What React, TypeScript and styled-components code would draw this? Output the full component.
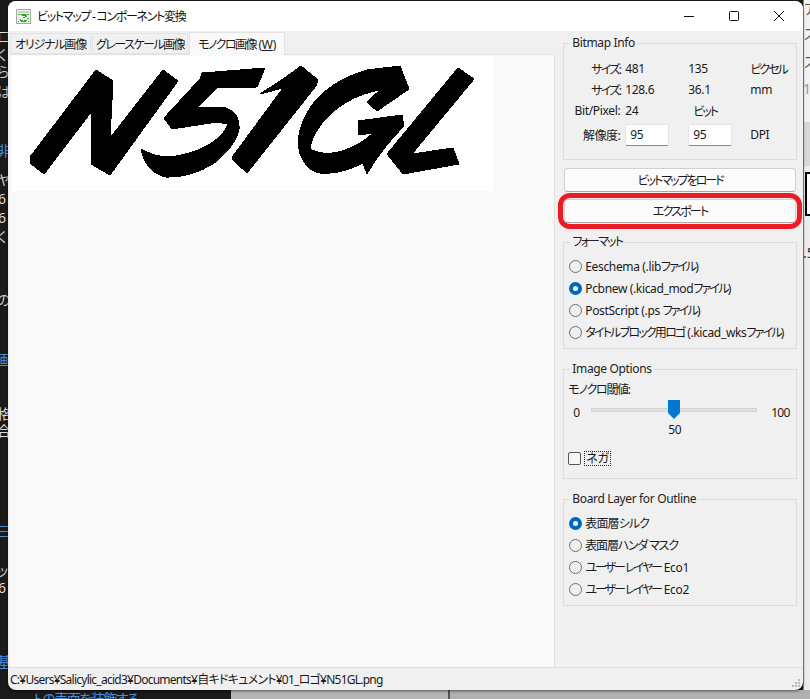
import React from "react";
import styled, { createGlobalStyle } from "styled-components";

const Global = createGlobalStyle`
  html, body { margin: 0; padding: 0; background: #1a1a1a; }
  * { box-sizing: border-box; }
`;

const Desktop = styled.div`
  position: relative;
  width: 810px;
  height: 699px;
  overflow: hidden;
  background: #1a1a1a;
  font-family: "Noto Sans", "Noto Sans CJK JP", sans-serif;
  font-feature-settings: "palt";
`;

const BackRight = styled.div`
  position: absolute;
  left: 803px;
  top: 0;
  width: 7px;
  height: 699px;
  background: linear-gradient(#f2f2f2 0 122px, #d8d8d8 122px 166px, #ececec 166px 699px);
  border-left: 1px solid #888;
`;

const BackBottomGrey = styled.div`
  position: absolute;
  left: 231px;
  top: 690px;
  width: 579px;
  height: 9px;
  background: linear-gradient(90deg, #b4b4b4 0 217px, #555 217px 219px, #b0b0b0 219px);
`;

const Fragment = styled.span<{ $x: number; $y: number; $c: string; $s?: number }>`
  position: absolute;
  left: ${(p) => p.$x}px;
  top: ${(p) => p.$y}px;
  color: ${(p) => p.$c};
  font-size: 14px;
  line-height: 16px;
  letter-spacing: ${(p) => p.$s ?? 0}px;
  white-space: nowrap;
`;

const BlackIcon = styled.div`
  position: absolute;
  left: 805px;
  top: 172px;
  width: 6px;
  height: 44px;
  background: #fff;
  border: 2px solid #000;
  border-right: none;
`;

const Window = styled.div`
  position: absolute;
  left: 8px;
  top: 1px;
  width: 795px;
  height: 689px;
  display: flex;
  flex-direction: column;
  background: #f0f0f0;
  border-radius: 8px;
  overflow: hidden;
  box-shadow: 0 1px 3px rgba(0, 0, 0, 0.55);
  font-size: 12px;
  letter-spacing: -0.35px;
  color: #1a1a1a;
`;

const K = styled.span<{ $s: number }>`
  letter-spacing: ${(p) => p.$s}px;
`;

const TitleBar = styled.div`
  height: 30px;
  flex: none;
  display: flex;
  align-items: center;
  background: #fff;
  padding: 0 2px 0 8px;
  gap: 6px;
`;

const TitleText = styled.span`
  flex: 1;
  font-size: 12px;
  letter-spacing: -1.3px;
  color: #111;
`;

const WinButtons = styled.div`
  display: flex;
`;

const WinButton = styled.div`
  width: 45px;
  height: 30px;
  display: flex;
  align-items: center;
  justify-content: center;
`;

const Body = styled.div`
  flex: 1;
  min-height: 0;
  display: flex;
  gap: 8px;
  padding: 1px 6px 0 2px;
`;

const Notebook = styled.div`
  width: 546px;
  display: flex;
  flex-direction: column;
`;

const TabRow = styled.div`
  height: 23px;
  flex: none;
  display: flex;
  align-items: flex-end;
  gap: 1px;
  border-bottom: 1px solid #e3e3e3;
`;

const Tab = styled.div<{ $active?: boolean; $w: number }>`
  width: ${(p) => p.$w}px;
  height: ${(p) => (p.$active ? 23 : 21)}px;
  display: flex;
  align-items: center;
  justify-content: center;
  white-space: nowrap;
  background: ${(p) => (p.$active ? "#f9f9f9" : "#f0f0f0")};
  border: 1px solid #e3e3e3;
  border-bottom: ${(p) => (p.$active ? "none" : "1px solid #e3e3e3")};
  margin-bottom: ${(p) => (p.$active ? "-1px" : "0")};
  position: relative;
  font-size: 12px;
`;

const Page = styled.div`
  flex: 1;
  min-height: 0;
  background: #f9f9f9;
  border-right: 1px solid #e3e3e3;
  padding: 1px 0 0 2px;
`;

const ImageBox = styled.div`
  width: 481px;
  height: 135px;
  background: #fff;
`;

const Side = styled.div`
  width: 234px;
  display: flex;
  flex-direction: column;
  position: relative;
`;

const Group = styled.fieldset<{ $h: number; $mt: number }>`
  margin: ${(p) => p.$mt}px 0 0;
  padding: 0 5px 0 5px;
  height: ${(p) => p.$h}px;
  border: 1px solid #dcdcdc;
  min-width: 0;
`;

const Legend = styled.legend`
  margin-left: 1px;
  padding: 0 2px;
  font-size: 12px;
  line-height: 14px;
  color: #222;
`;

const InfoGrid = styled.div`
  display: grid;
  grid-template-columns: 56px 63px 62px auto;
  grid-template-rows: 21px 21px 21px 27px;
  column-gap: 0;
  margin-top: 8px;
  align-items: center;
`;

const InfoLabel = styled.span`
  text-align: right;
  padding-right: 5px;
  white-space: nowrap;
`;

const InfoValue = styled.span`
  white-space: nowrap;
`;

const BitUnit = styled.span`
  white-space: nowrap;
  padding-left: 5px;
`;

const NumField = styled.div`
  width: 44px;
  height: 22px;
  background: #fff;
  border: 1px solid #e5e5e5;
  border-bottom: 1px solid #8a8a8a;
  border-radius: 2px;
  padding-left: 4px;
  line-height: 20px;
`;

const Btn = styled.div<{ $mt: number }>`
  margin: ${(p) => p.$mt}px 1px 0;
  height: 24px;
  flex: none;
  display: flex;
  align-items: center;
  justify-content: center;
  background: #fbfbfb;
  border: 1px solid #d0d0d0;
  border-bottom: 1px solid #a8a8a8;
  border-radius: 4px;
  font-size: 12px;
`;

const Highlight = styled.div`
  position: absolute;
  left: -5px;
  top: 161px;
  width: 244px;
  height: 36px;
  border: 5px solid #ed1c24;
  border-radius: 12px;
  pointer-events: none;
`;

const RadioList = styled.div`
  display: flex;
  flex-direction: column;
  margin-top: 6px;
`;

const RadioRow = styled.div`
  height: 22px;
  display: flex;
  align-items: center;
  gap: 3px;
  white-space: nowrap;
`;

const RadioDot = styled.span<{ $on?: boolean }>`
  width: 13px;
  height: 13px;
  flex: none;
  border-radius: 50%;
  background: ${(p) => (p.$on ? "#fff" : "transparent")};
  border: ${(p) => (p.$on ? "4px solid #0067c0" : "1px solid #6e6e6e")};
`;

const Caption = styled.div`
  margin: 6px 0 0 -1px;
  line-height: 16px;
`;

const SliderRow = styled.div`
  display: grid;
  grid-template-columns: 22px 166px 1fr;
  margin-top: 3px;
  height: 22px;
  align-items: center;
`;

const SliderEnd = styled.span<{ $pad: number; $s?: number }>`
  padding-left: ${(p) => p.$pad}px;
  letter-spacing: ${(p) => p.$s ?? -0.35}px;
`;

const Track = styled.div`
  position: relative;
  height: 4px;
  background: #e0e0e0;
  border: 1px solid #d4d4d4;
  margin-top: -5px;
`;

const Thumb = styled.svg`
  position: absolute;
  left: 76px;
  top: -9px;
`;

const SliderValue = styled.div`
  text-align: center;
  width: 210px;
  margin-top: -1px;
  padding-left: 1px;
  line-height: 16px;
`;

const CheckRow = styled.div`
  display: flex;
  align-items: center;
  gap: 3px;
  margin: 13px 0 0 -1px;
`;

const CheckBox = styled.span`
  width: 13px;
  height: 13px;
  border: 1px solid #555;
  border-radius: 2px;
  background: #f5f5f5;
`;

const CheckText = styled.span`
  border: 1px dotted #222;
  padding: 0 1px;
  line-height: 13px;
`;

const StatusBar = styled.div`
  height: 23px;
  flex: none;
  border-top: 1px solid #dedede;
  display: flex;
  align-items: center;
  padding-left: 2px;
  position: relative;
  font-size: 12px;
  letter-spacing: -0.75px;
  white-space: nowrap;
`;

const Grip = styled.svg`
  position: absolute;
  right: 2px;
  bottom: 2px;
`;

const AppIcon = () => (
  <svg width="15" height="15" viewBox="0 0 15 15" shapeRendering="crispEdges">
    <rect x="0.5" y="0.5" width="14" height="14" fill="#f0f0ec" stroke="#a8a8a8" />
    <rect x="2" y="2" width="11" height="2" fill="#c8d4c0" />
    <path d="M5 5h5v1h1v2H9V7H6V6H5zM7 8h2v1H7zM4 10h1v1h2v1H4zM8 11h3v1H8z" fill="#1fa51f" />
    <path d="M2 5h2v1H2zM11 5h2v1h-2zM2 12h1v1H2zM11 9h2v1h-2zM12 12h1v1h-1zM5 12h5v1H5z" fill="#14c014" />
  </svg>
);

const LOGO = [
  "M96 69 L113 80 L110 137 L163 69 L178 80 L110 174 L91 163 L92 110 L44 173 L30 162 L30 156 Z",
  "M202 72 L265 67 L257 86 L217 87 L197 107 Q215 105 226 107 Q240 112 239 128 Q236 145 213 163 Q190 177 165 176 Q145 170 141 148 Q155 156 170 156 Q200 152 217 138 Q226 130 228 123 L217 121 L172 128 L164 117 L200 78 Z",
  "M301 65 L318 79 L316 85 L247 172 L232 158 L233 155 L283 87 L260 93 L283 78 Z",
  "M400 65 L409 88 L377 110 L367 101 L380 89 Q345 95 322 122 Q311 137 310 148 Q325 156 345 149 Q362 143 373 132 L359 134 L358 120 L402 114 L404 125 Q382 147 367 173 L363 162 Q340 174 320 172 Q307 170 300 153 Q294 130 312 104 Q330 80 367 69 Z",
  "M458 67 L474 78 L412 153 L453 147 L459 163 L403 173 L387 153 Z",
];

const Logo = () => (
  <svg width="481" height="135" viewBox="12 55 481 135" shapeRendering="crispEdges">
    {LOGO.map((d) => (
      <path key={d} d={d} fill="#000" stroke="#000" strokeWidth="1" strokeLinejoin="round" />
    ))}
  </svg>
);

const Radio = ({ on, children }: { on?: boolean; children: React.ReactNode }) => (
  <RadioRow>
    <RadioDot $on={on} />
    <span>{children}</span>
  </RadioRow>
);

export default function App() {
  return (
    <Desktop>
      <Global />
      <BackRight />
      <BackBottomGrey />
      <BlackIcon />
      <Fragment $x={-3} $y={29} $c="#ddd">口</Fragment>
      <Fragment $x={-3} $y={47} $c="#ccc">く</Fragment>
      <Fragment $x={-3} $y={64} $c="#ccc">ら</Fragment>
      <Fragment $x={-3} $y={84} $c="#ccc">は</Fragment>
      <Fragment $x={-3} $y={143} $c="#4a90d9">非</Fragment>
      <Fragment $x={-3} $y={172} $c="#ccc">ヤ</Fragment>
      <Fragment $x={-2} $y={191} $c="#ddd">6</Fragment>
      <Fragment $x={-2} $y={210} $c="#ddd">6</Fragment>
      <Fragment $x={-3} $y={229} $c="#ccc">く</Fragment>
      <Fragment $x={-3} $y={292} $c="#ccc">の</Fragment>
      <Fragment $x={-3} $y={352} $c="#4a90d9">画</Fragment>
      <Fragment $x={-3} $y={406} $c="#ddd">格</Fragment>
      <Fragment $x={-3} $y={423} $c="#ddd">合</Fragment>
      <Fragment $x={-3} $y={523} $c="#4a90d9">三</Fragment>
      <Fragment $x={-3} $y={563} $c="#ccc">ッ</Fragment>
      <Fragment $x={-2} $y={580} $c="#ddd">6</Fragment>
      <Fragment $x={-3} $y={654} $c="#4a90d9">基</Fragment>
      <Fragment $x={804} $y={1} $c="#555">ア</Fragment>
      <Fragment $x={804} $y={26} $c="#555">ス</Fragment>
      <Fragment $x={804} $y={54} $c="#555">ス</Fragment>
      <Fragment $x={803} $y={81} $c="#999">1C</Fragment>
      <Fragment $x={803} $y={245} $c="#333">.5</Fragment>
      <Fragment $x={33} $y={691} $c="#4a90d9" $s={-1.5}>トの表面を装飾する</Fragment>
      <Window>
        <TitleBar>
          <AppIcon />
          <TitleText>ビットマップ - コンポーネント変換</TitleText>
          <WinButtons>
            <WinButton>
              <svg width="10" height="10" viewBox="0 0 10 10">
                <path d="M0 5.5h10" stroke="#111" fill="none" />
              </svg>
            </WinButton>
            <WinButton>
              <svg width="10" height="10" viewBox="0 0 10 10">
                <rect x="0.5" y="0.5" width="9" height="9" rx="1" stroke="#111" fill="none" />
              </svg>
            </WinButton>
            <WinButton>
              <svg width="10" height="10" viewBox="0 0 10 10">
                <path d="M0 0l10 10M10 0L0 10" stroke="#111" fill="none" />
              </svg>
            </WinButton>
          </WinButtons>
        </TitleBar>
        <Body>
          <Notebook>
            <TabRow>
              <Tab $w={81}><K $s={-1.2}>オリジナル画像</K></Tab>
              <Tab $w={96}><K $s={-1.5}>グレースケール画像</K></Tab>
              <Tab $w={96} $active>
                <span>
                  <K $s={-1.6}>モノクロ画像</K> (<u>W</u>)
                </span>
              </Tab>
            </TabRow>
            <Page>
              <ImageBox>
                <Logo />
              </ImageBox>
            </Page>
          </Notebook>
          <Side>
            <Group $h={124} $mt={4}>
              <Legend>Bitmap Info</Legend>
              <InfoGrid>
                <InfoLabel><K $s={-1.7}>サイズ:</K></InfoLabel>
                <InfoValue>481</InfoValue>
                <InfoValue>135</InfoValue>
                <InfoValue><K $s={-2}>ピクセル</K></InfoValue>
                <InfoLabel><K $s={-1.7}>サイズ:</K></InfoLabel>
                <InfoValue>128.6</InfoValue>
                <InfoValue>36.1</InfoValue>
                <InfoValue>mm</InfoValue>
                <InfoLabel>Bit/Pixel:</InfoLabel>
                <InfoValue>24</InfoValue>
                <BitUnit><K $s={-2}>ビット</K></BitUnit>
                <span />
                <InfoLabel><K $s={-0.5}>解像度:</K></InfoLabel>
                <NumField>95</NumField>
                <NumField>95</NumField>
                <InfoValue>DPI</InfoValue>
              </InfoGrid>
            </Group>
            <Btn $mt={8}><K $s={-2}>ビットマップをロード</K></Btn>
            <Btn $mt={7}><K $s={-1.8}>エクスポート</K></Btn>
            <Highlight />
            <Group $h={114} $mt={12}>
              <Legend><K $s={-1.8}>フォーマット</K></Legend>
              <RadioList>
                <Radio>Eeschema (.lib<K $s={-1.8}>ファイル</K>)</Radio>
                <Radio on>Pcbnew (.kicad_mod<K $s={-1.8}>ファイル</K>)</Radio>
                <Radio>PostScript (.ps <K $s={-1.8}>ファイル</K>)</Radio>
                <Radio><K $s={-1.8}>タイトルブロック用ロゴ</K> (.kicad_wks<K $s={-1.8}>ファイル</K>)</Radio>
              </RadioList>
            </Group>
            <Group $h={117} $mt={13}>
              <Legend>Image Options</Legend>
              <Caption><K $s={-1.3}>モノクロ閾値:</K></Caption>
              <SliderRow>
                <SliderEnd $pad={4}>0</SliderEnd>
                <Track>
                  <Thumb width="12" height="19" viewBox="0 0 12 19">
                    <path d="M0 0h12v13l-6 6-6-6z" fill="#0078d4" />
                  </Thumb>
                </Track>
                <SliderEnd $pad={14} $s={-0.8}>100</SliderEnd>
              </SliderRow>
              <SliderValue>50</SliderValue>
              <CheckRow>
                <CheckBox />
                <CheckText>ネガ</CheckText>
              </CheckRow>
            </Group>
            <Group $h={114} $mt={13}>
              <Legend>Board Layer for Outline</Legend>
              <RadioList>
                <Radio on><K $s={-0.9}>表面層シルク</K></Radio>
                <Radio><K $s={-1.2}>表面層ハンダ マスク</K></Radio>
                <Radio><K $s={-2}>ユーザー レイヤー</K> Eco1</Radio>
                <Radio><K $s={-2}>ユーザー レイヤー</K> Eco2</Radio>
              </RadioList>
            </Group>
          </Side>
        </Body>
        <StatusBar>
          C:¥Users¥Salicylic_acid3¥Documents¥自キドキュメント¥01_ロゴ¥N51GL.png
          <Grip width="10" height="10" viewBox="0 0 10 10">
            <path d="M7 1h2v2H7zM4 4h2v2H4zM7 4h2v2H7zM1 7h2v2H1zM4 7h2v2H4zM7 7h2v2H7z" fill="#b8b8b8" />
          </Grip>
        </StatusBar>
      </Window>
    </Desktop>
  );
}
